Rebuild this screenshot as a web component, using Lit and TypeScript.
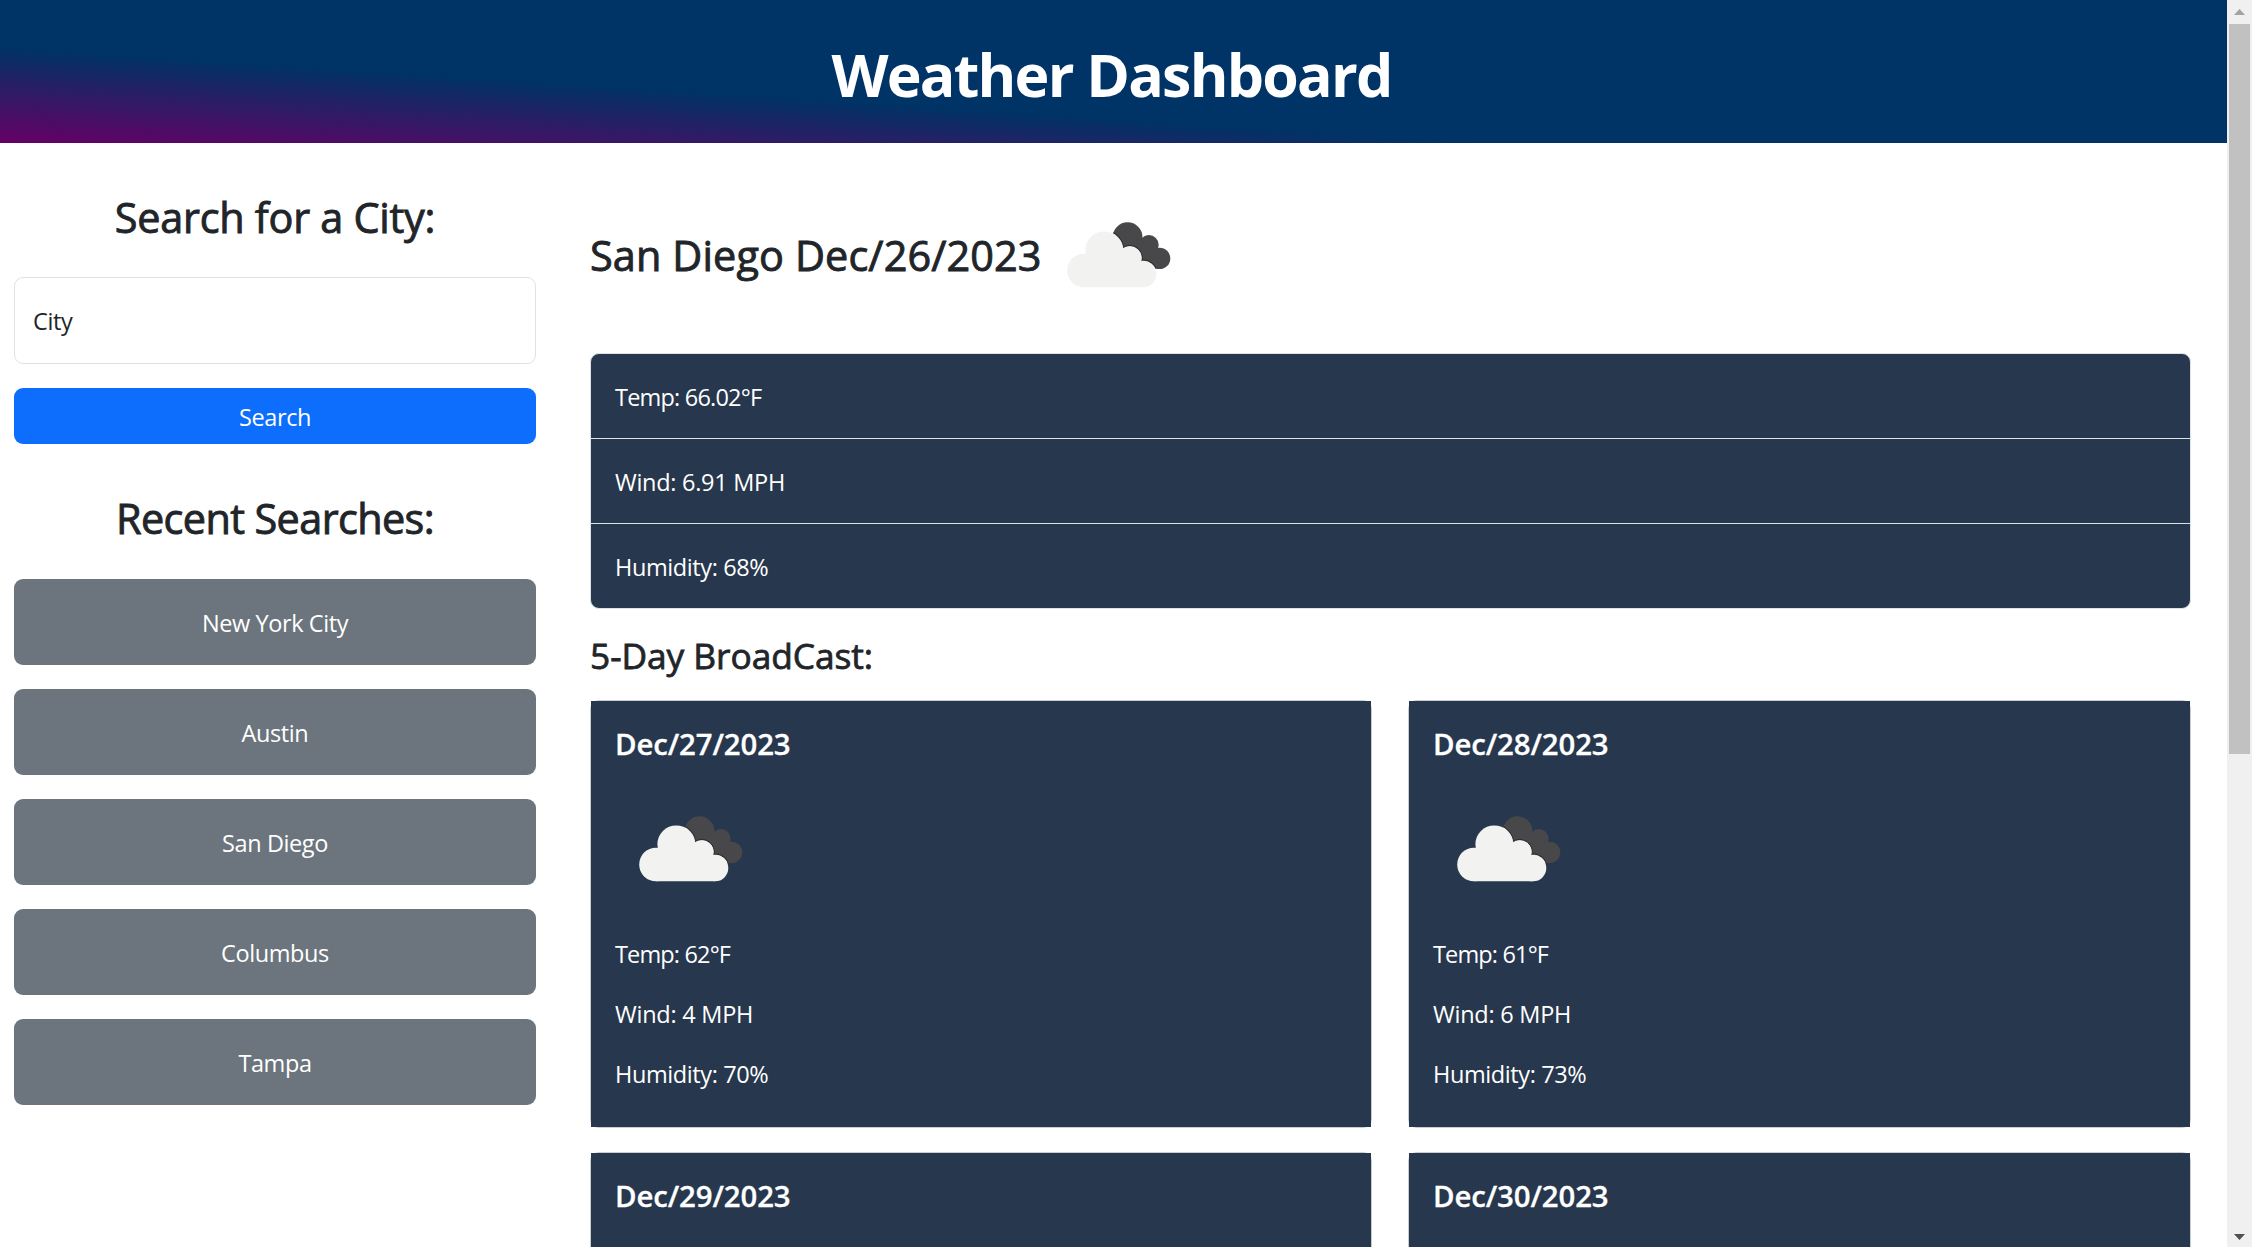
import { LitElement, html, css, svg } from "lit";
import { customElement, property } from "lit/decorators.js";

interface Forecast {
  date: string;
  temp: string;
  wind: string;
  humidity: string;
}

const forecasts: Forecast[] = [
  { date: "Dec/27/2023", temp: "62°F", wind: "4 MPH", humidity: "70%" },
  { date: "Dec/28/2023", temp: "61°F", wind: "6 MPH", humidity: "73%" },
  { date: "Dec/29/2023", temp: "", wind: "", humidity: "" },
  { date: "Dec/30/2023", temp: "", wind: "", humidity: "" },
];

const recent = ["New York City", "Austin", "San Diego", "Columbus", "Tampa"];

const darkShapes = svg`
  <circle cx="84.6" cy="57.2" r="14.9" />
  <circle cx="105.9" cy="64.9" r="9.8" />
  <circle cx="116.6" cy="78.4" r="10.7" />
  <path d="M84 57L106 62L118 78L116 89L96 86L78 70Z" />
`;

const lightShapes = svg`
  <circle cx="41" cy="90.5" r="16.8" />
  <circle cx="61.2" cy="70.2" r="18.8" />
  <circle cx="86.8" cy="78" r="11.6" />
  <circle cx="100.1" cy="94.1" r="13.2" />
  <path d="M41 107.3V84L60 72L88 78L100 90V107.3Z" />
`;

@customElement("cloud-icon")
export class CloudIcon extends LitElement {
  static styles = css`
    :host {
      display: block;
      width: 150px;
      height: 150px;
    }
    .svg {
      display: block;
    }
  `;
  render() {
    return html`<svg class="svg" width="150" height="150" viewBox="0 0 150 150">
      <defs><clipPath id="back">${darkShapes}</clipPath></defs>
      <g fill="#48484a">${darkShapes}</g>
      <g clip-path="url(#back)">
        <g fill="#2c2c2e" stroke="#2c2c2e" stroke-width="2.6">${lightShapes}</g>
        <g fill="#ffffff" stroke="#ffffff" stroke-width="0.5">${lightShapes}</g>
      </g>
      <g fill="#f2f2f0">${lightShapes}</g>
    </svg>`;
  }
}

@customElement("forecast-card")
export class ForecastCard extends LitElement {
  @property({ attribute: false }) day!: Forecast;
  static styles = css`
    :host {
      display: block;
      box-sizing: border-box;
      height: 428px;
      border: 1px solid #c9cdd0;
      border-radius: 9px;
    }
    .body {
      box-sizing: border-box;
      height: 426px;
      padding: 25px 24px 0;
      background: #27374d;
      color: #fff;
    }
    .date {
      margin: 0 0 12px;
      font-size: 29.4px;
      line-height: 36px;
      font-weight: 600;
      letter-spacing: -0.12px;
      -webkit-text-stroke: 0.3px currentColor;
    }
    .icon {
      margin-bottom: 12px;
    }
    .line {
      margin: 0 0 24px;
      line-height: 36px;
    }
    .temp {
      letter-spacing: -0.85px;
    }
    .wind {
      letter-spacing: -0.25px;
    }
  `;
  render() {
    const d = this.day;
    return html`<div class="body">
      <h5 class="date">${d.date}</h5>
      <cloud-icon class="icon"></cloud-icon>
      ${d.temp
        ? html`<p class="line temp">Temp: ${d.temp}</p>
            <p class="line wind">Wind: ${d.wind}</p>
            <p class="line">Humidity: ${d.humidity}</p>`
        : null}
    </div>`;
  }
}

@customElement("app-root")
export class AppRoot extends LitElement {
  static styles = css`
    :host {
      display: flex;
      height: 1247px;
      overflow: hidden;
      background: #fff;
      color: #212529;
      font-family: "Open Sans", "Noto Sans", sans-serif;
      font-size: 23.5px;
      letter-spacing: -0.4px;
    }
    .page {
      width: 2227px;
      height: 1247px;
      overflow: hidden;
    }
    .header {
      box-sizing: border-box;
      height: 143px;
      padding: 38px 4px 0 0;
      text-align: center;
      color: #fff;
      background: linear-gradient(to top right, #660066, #003366 33.3%);
    }
    .title {
      margin: 0;
      font-size: 59px;
      line-height: 72px;
      font-weight: 700;
      letter-spacing: -1.75px;
    }
    .columns {
      display: flex;
    }
    .side {
      box-sizing: border-box;
      width: 550px;
      padding: 49px 14px 0;
      text-align: center;
    }
    .heading {
      margin: 0;
      font-size: 41.4px;
      line-height: 50px;
      font-weight: 400;
      letter-spacing: -0.26px;
      -webkit-text-stroke: 0.9px currentColor;
    }
    .field {
      box-sizing: border-box;
      height: 87px;
      margin-top: 35px;
      padding: 0 18px;
      border: 1px solid #dee2e6;
      border-radius: 9px;
      line-height: 87px;
      text-align: left;
    }
    .btn {
      display: block;
      box-sizing: border-box;
      width: 100%;
      margin: 24px 0 0;
      padding: 0;
      border: 0;
      border-radius: 9px;
      height: 86px;
      background: #6c757d;
      color: #fff;
      font: inherit;
      letter-spacing: inherit;
      line-height: 88px;
    }
    .btn.primary {
      height: 56px;
      line-height: 58px;
      background: #0d6efd;
    }
    .recent {
      margin: 49px 0 36px;
      letter-spacing: -0.6px;
    }
    .place {
      letter-spacing: 0.12px;
    }
    .main {
      box-sizing: border-box;
      flex: 1;
      padding: 37px 36px 0 40px;
    }
    .today {
      display: flex;
      align-items: center;
      height: 150px;
      gap: 1px;
    }
    .stats {
      margin: 23px 0 0;
      padding: 0;
      list-style: none;
      border: 1px solid #dee2e6;
      border-radius: 9px;
      overflow: hidden;
      background: #27374d;
      color: #fff;
    }
    .stat {
      height: 84px;
      padding-left: 24px;
      line-height: 86px;
    }
    .stat + .stat {
      border-top: 1px solid #dee2e6;
    }
    .temp {
      letter-spacing: -0.8px;
    }
    .wind {
      letter-spacing: -0.28px;
    }
    .sub {
      margin: 24px 0 23px;
      font-size: 35.3px;
      line-height: 44px;
      font-weight: 400;
      letter-spacing: -0.05px;
      -webkit-text-stroke: 0.8px currentColor;
    }
    .grid {
      display: grid;
      grid-template-columns: 782px 783px;
      justify-content: space-between;
      row-gap: 24px;
    }
    .scroll {
      box-sizing: border-box;
      width: 25px;
      height: 1247px;
      padding: 9px 2px 7px;
      display: flex;
      flex-direction: column;
      align-items: center;
      background: #f0f0f0;
    }
    .arrow {
      display: block;
      width: 11px;
      height: 6px;
    }
    .thumb {
      width: 21px;
      height: 730px;
      margin: 9px 0 auto;
      background: #c1c1c1;
    }
  `;

  render() {
    return html`
      <div class="page">
        <header class="header"><h1 class="title">Weather Dashboard</h1></header>
        <div class="columns">
          <aside class="side">
            <h3 class="heading">Search for a City:</h3>
            <div class="field">City</div>
            <button class="btn primary">Search</button>
            <h3 class="heading recent">Recent Searches:</h3>
            ${recent.map((c) => html`<button class="btn">${c}</button>`)}
          </aside>
          <main class="main">
            <div class="today">
              <h3 class="heading place">San Diego Dec/26/2023</h3>
              <cloud-icon></cloud-icon>
            </div>
            <ul class="stats">
              <li class="stat temp">Temp: 66.02°F</li>
              <li class="stat wind">Wind: 6.91 MPH</li>
              <li class="stat">Humidity: 68%</li>
            </ul>
            <h4 class="sub">5-Day BroadCast:</h4>
            <div class="grid">
              ${forecasts.map((f) => html`<forecast-card .day=${f}></forecast-card>`)}
            </div>
          </main>
        </div>
      </div>
      <div class="scroll">
        <svg class="arrow" viewBox="0 0 11 6"><path d="M5.5 0L11 6H0Z" fill="#a3a3a3" /></svg>
        <div class="thumb"></div>
        <svg class="arrow" viewBox="0 0 11 6"><path d="M0 0H11L5.5 6Z" fill="#505050" /></svg>
      </div>
    `;
  }
}
